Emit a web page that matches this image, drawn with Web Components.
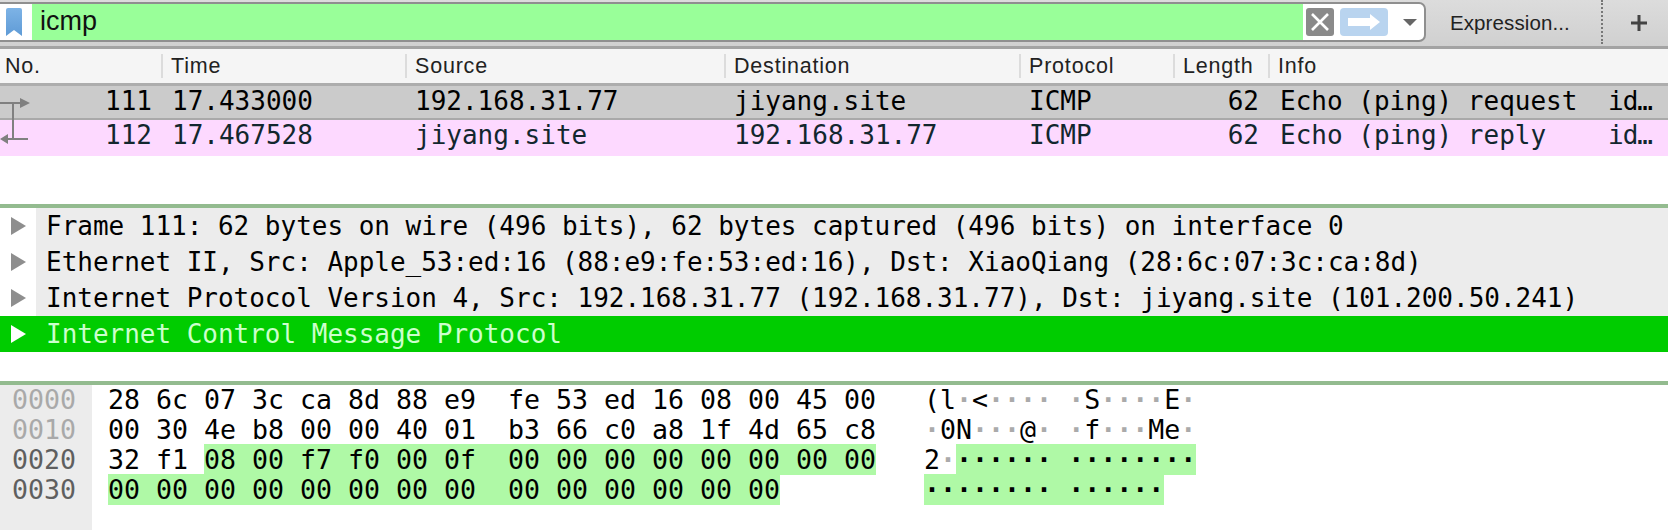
<!DOCTYPE html>
<html>
<head>
<meta charset="utf-8">
<title>icmp</title>
<style>
  html, body { margin: 0; background: #fff; }
  body { width: 1668px; height: 530px; overflow: hidden; display: flex; flex-direction: column; }
</style>
</head>
<body>
<filter-bar value="icmp"></filter-bar>
<packet-list></packet-list>
<proto-tree></proto-tree>
<byte-view></byte-view>

<script>
const MONO = `"DejaVu Sans Mono", monospace`;
const SANS = `"Liberation Sans", Arial, sans-serif`;

class FilterBar extends HTMLElement {
  constructor() {
    super();
    this.attachShadow({ mode: 'open' });
    this.shadowRoot.innerHTML = `
      <style>
        :host {
          display: flex;
          align-items: flex-start;
          height: 49px;
          box-sizing: border-box;
          padding-top: 2px;
          border-bottom: 3px solid #a3a3a3;
          background: linear-gradient(#dcdcdc, #d0d0d0);
          font-family: ${SANS};
        }
        .box {
          width: 1426px;
          height: 40px;
          box-sizing: border-box;
          display: flex;
          align-items: center;
          background: #fff;
          border: 2px solid #8f8f8f;
          border-left: 0;
          border-radius: 0 7px 7px 0;
        }
        .mark { width: 31px; height: 100%; display: flex; align-items: center; justify-content: flex-start; padding-left: 6px; box-sizing: border-box; }
        .field {
          width: 1271px;
          height: 100%;
          margin-left: 1px;
          padding-left: 8px;
          box-sizing: border-box;
          background: #99ff99;
          font-size: 27px;
          line-height: 35px;
          color: #111;
        }
        .clear { margin-left: 3px; width: 28px; height: 28px; }
        .apply { margin-left: 6px; width: 48px; height: 28px; }
        .drop { margin-left: 15px; width: 14px; height: 7px; }
        .expr { width: 175px; padding-left: 24px; box-sizing: border-box; font-size: 20.5px; letter-spacing: .1px; line-height: 42px; color: #222; }
        .sep { width: 0; height: 44px; margin-top: -2px; border-left: 2px dotted #777; }
        .plus { flex: 1; height: 42px; display: flex; align-items: center; justify-content: center; padding-left: 7px; }
      </style>
      <div class="box">
        <div class="mark">
          <svg width="16" height="28" viewBox="0 0 16 28">
            <defs><linearGradient id="bm" x1="0" y1="0" x2="0" y2="1"><stop offset="0" stop-color="#7db3e6"/><stop offset="1" stop-color="#5f9bd6"/></linearGradient></defs>
            <path d="M2 0H14Q16 0 16 2V28L8 22L0 28V2Q0 0 2 0Z" fill="url(#bm)"/>
          </svg>
        </div>
        <div class="field"></div>
        <svg class="clear" viewBox="0 0 28 28"><rect width="28" height="28" rx="3" fill="#8a8a8a"/><path d="M6 6L22 22M22 6L6 22" stroke="#fff" stroke-width="2.6"/></svg>
        <svg class="apply" viewBox="0 0 48 28"><rect width="48" height="28" rx="4" fill="#b9d4ef"/><path d="M8 10H30V6L40 14L30 22V18H8Z" fill="#fff"/></svg>
        <svg class="drop" viewBox="0 0 14 7"><path d="M0 0H14L7 7Z" fill="#666"/></svg>
      </div>
      <div class="expr">Expression...</div>
      <div class="sep"></div>
      <div class="plus">
        <svg width="16" height="16" viewBox="0 0 16 16"><path d="M6.5 0H9.5V6.5H16V9.5H9.5V16H6.5V9.5H0V6.5H6.5Z" fill="#444"/></svg>
      </div>
    `;
    this.shadowRoot.querySelector('.field').textContent = this.getAttribute('value');
  }
}

const COLUMNS = '161px 244px 319px 295px 154px 95px 1fr';

class PacketList extends HTMLElement {
  constructor() {
    super();
    this.attachShadow({ mode: 'open' });
    const heads = ['No.', 'Time', 'Source', 'Destination', 'Protocol', 'Length', 'Info'];
    const rows = [
      { cls: 'req', cells: ['111', '17.433000', '192.168.31.77', 'jiyang.site', 'ICMP', '62', 'Echo (ping) request'] },
      { cls: 'rep', cells: ['112', '17.467528', 'jiyang.site', '192.168.31.77', 'ICMP', '62', 'Echo (ping) reply'] }
    ];
    this.shadowRoot.innerHTML = `
      <style>
        :host { display: block; position: relative; height: 155px; }
        .head, .row { display: grid; grid-template-columns: ${COLUMNS}; }
        .head {
          height: 34px;
          background: #f5f5f5;
          font: 21.5px/24px ${SANS};
          letter-spacing: .8px;
          color: #222;
          border-bottom: 3px solid #adadad;
        }
        .head div { padding-left: 8px; margin: 5px 0; border-left: 2px solid #dcdcdc; white-space: nowrap; }
        .head div:first-child { padding-left: 5px; border-left: 0; }
        .row { font: 26px/30px ${MONO}; white-space: nowrap; }
        .row div { padding-left: 10px; overflow: hidden; }
        .row div:nth-child(2) { padding-left: 11px; }
        .row .num { padding: 0 9px 0 0; text-align: right; }
        .req { background: #cbcbcb; color: #000; border-bottom: 2px solid #a9a9a9; height: 32px; }
        .rep { background: #fdd9ff; color: #12272e; height: 36px; }
        .row .info { position: relative; padding-left: 12px; }
        .info i { position: absolute; left: 340px; top: 0; font-style: normal; letter-spacing: -1px; }
        svg { position: absolute; left: 0; top: 40px; }
      </style>
      <div class="head">${heads.map(h => `<div>${h}</div>`).join('')}</div>
      ${rows.map(r => `
        <div class="row ${r.cls}">
          ${r.cells.map((c, i) => {
            if (i === 0 || i === 5) return `<div class="num">${c}</div>`;
            if (i === 6) return `<div class="info">${c}<i>id…</i></div>`;
            return `<div>${c}</div>`;
          }).join('')}
        </div>`).join('')}
      <svg width="32" height="60" viewBox="0 0 32 60">
        <path d="M0 14H21M13 14V50M8 50H28" stroke="#808080" stroke-width="2" fill="none"/>
        <path d="M20 9L30 14L20 19Z M0 50L8 45V55Z" fill="#808080"/>
      </svg>
    `;
  }
}

class ProtoTree extends HTMLElement {
  constructor() {
    super();
    this.attachShadow({ mode: 'open' });
    const lines = [
      'Frame 111: 62 bytes on wire (496 bits), 62 bytes captured (496 bits) on interface 0',
      'Ethernet II, Src: Apple_53:ed:16 (88:e9:fe:53:ed:16), Dst: XiaoQiang (28:6c:07:3c:ca:8d)',
      'Internet Protocol Version 4, Src: 192.168.31.77 (192.168.31.77), Dst: jiyang.site (101.200.50.241)',
      'Internet Control Message Protocol'
    ];
    this.shadowRoot.innerHTML = `
      <style>
        :host {
          display: block;
          height: 173px;
          border-top: 4px solid #93bb8f;
          font: 26px/36px ${MONO};
        }
        .row { display: flex; height: 36px; white-space: pre; letter-spacing: -.02px; color: #000; }
        .arrow { width: 36px; display: flex; align-items: center; padding-left: 11px; box-sizing: border-box; }
        .text { flex: 1; background: #ececec; padding-left: 10px; }
        .sel { background: #00cc00; }
        .sel .text { background: none; color: #ccffcc; }
      </style>
      ${lines.map((l, i) => `
        <div class="row ${i === 3 ? 'sel' : ''}">
          <div class="arrow"><svg width="15" height="18" viewBox="0 0 15 18"><path d="M0 0L15 9L0 18Z" fill="${i === 3 ? '#fff' : '#8e8e8e'}"/></svg></div>
          <div class="text">${l}</div>
        </div>`).join('')}
    `;
  }
}

class ByteView extends HTMLElement {
  constructor() {
    super();
    this.attachShadow({ mode: 'open' });
    const rows = [
      { off: '0000', dim: true, hex: '28 6c 07 3c ca 8d 88 e9  fe 53 ed 16 08 00 45 00', asc: '(l·&lt;···· ·S····E·' },
      { off: '0010', dim: true, hex: '00 30 4e b8 00 00 40 01  b3 66 c0 a8 1f 4d 65 c8', asc: '·0N···@· ·f···Me·' },
      { off: '0020', hexPre: '32 f1 ', hex: '08 00 f7 f0 00 0f  00 00 00 00 00 00 00 00', ascPre: '2·', asc: '······ ········', on: true },
      { off: '0030', hex: '00 00 00 00 00 00 00 00  00 00 00 00 00 00', asc: '········ ······', on: true }
    ];
    const ascii = s => s.replace(/·/g, '<b>·</b>');
    this.shadowRoot.innerHTML = `
      <style>
        :host {
          display: flex;
          flex: 1;
          border-top: 4px solid #93bb8f;
          font: 26.58px/30px ${MONO};
          white-space: pre;
          color: #000;
        }
        .off { width: 92px; padding-left: 12px; box-sizing: border-box; background: #ececec; color: #5f5f5f; }
        .off .dim { color: #a9a9a9; }
        .hex { width: 832px; padding-left: 16px; box-sizing: border-box; }
        .asc { flex: 1; }
        .on { background: #aff9a6; }
        b { font-weight: bold; color: #aaa; }
        .on b { color: #000; }
      </style>
      <div class="off">${rows.map(r => `<div class="${r.dim ? 'dim' : ''}">${r.off}</div>`).join('')}</div>
      <div class="hex">${rows.map(r => `<div>${r.hexPre || ''}${r.on ? `<span class="on">${r.hex}</span>` : r.hex}</div>`).join('')}</div>
      <div class="asc">${rows.map(r => `<div>${r.ascPre ? ascii(r.ascPre) : ''}${r.on ? `<span class="on">${ascii(r.asc)}</span>` : ascii(r.asc)}</div>`).join('')}</div>
    `;
  }
}

customElements.define('filter-bar', FilterBar);
customElements.define('packet-list', PacketList);
customElements.define('proto-tree', ProtoTree);
customElements.define('byte-view', ByteView);
</script>
</body>
</html>
